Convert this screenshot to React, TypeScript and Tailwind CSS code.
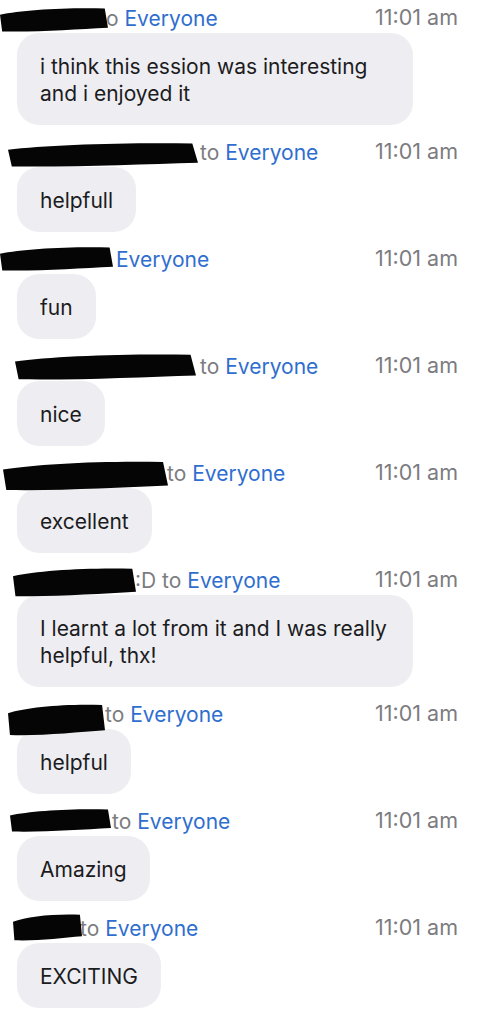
import React from "react";

type Msg = {
  sx: number;
  sw: number;
  st: number;
  sh: number;
  start: number;
  prefix: string;
  lines: string;
};

const msgs: Msg[] = [
  { sx: 0, sw: 108, st: 4, sh: 26, start: 106, prefix: "o ", lines: "i think this ession was interesting and i enjoyed it" },
  { sx: 8, sw: 190, st: 5, sh: 26, start: 200, prefix: "to ", lines: "helpfull" },
  { sx: 0, sw: 113, st: 2, sh: 26, start: 116, prefix: "", lines: "fun" },
  { sx: 15, sw: 181, st: 2, sh: 28, start: 200, prefix: "to ", lines: "nice" },
  { sx: 3, sw: 165, st: 2, sh: 32, start: 167, prefix: "to ", lines: "excellent" },
  { sx: 13, sw: 123, st: 2, sh: 31, start: 135, prefix: ":D to ", lines: "I learnt a lot from it and I was really helpful, thx!" },
  { sx: 8, sw: 97, st: 4, sh: 34, start: 105, prefix: "to ", lines: "helpful" },
  { sx: 10, sw: 101, st: 2, sh: 25, start: 112, prefix: "to ", lines: "Amazing" },
  { sx: 13, sw: 69, st: 0, sh: 29, start: 80, prefix: "to ", lines: "EXCITING" },
];

function Scribble({ w, h }: { w: number; h: number }) {
  const d = `M0,${h * 0.3} C${w * 0.2},${h * 0.12} ${w * 0.6},${h * 0.02} ${w * 0.97},${h * 0.06} L${w},${h * 0.8} C${w * 0.7},${h * 0.86} ${w * 0.35},${h * 0.97} ${w * 0.02},${h * 0.94} Z`;
  return (
    <svg width={w} height={h} viewBox={`0 0 ${w} ${h}`} className="block" style={{ filter: "blur(0.6px)" }}>
      <path d={d} fill="#050505" />
    </svg>
  );
}

export default function App() {
  return (
    <div
      className="w-[479px] min-h-[1024px] bg-white pt-[3px]"
      style={{ fontFamily: "Inter, 'Liberation Sans', sans-serif" }}
    >
      {msgs.map((m, i) => (
        <div key={i} className="mb-[12px]">
          <div className="relative flex h-[30px] items-center pr-[21px]">
            <div className="absolute" style={{ left: m.sx, top: m.st }}>
              <Scribble w={m.sw} h={m.sh} />
            </div>
            <div className="flex-1 text-[21px] leading-none whitespace-pre" style={{ paddingLeft: m.start }}>
              <span className="text-[#7c7c80]">{m.prefix}</span>
              <span className="text-[#2f6ecf]">Everyone</span>
            </div>
            <div className="text-[21.5px] leading-none text-[#7c7c80]">11:01 am</div>
          </div>
          <div className="pl-[17px]">
            <div className="inline-block max-w-[396px] rounded-[22px] bg-[#eeeef2] pl-[23px] pr-[23px] pt-[20px] pb-[18px] text-[21px] leading-[27px] text-[#1c1c1e]">
              {m.lines}
            </div>
          </div>
        </div>
      ))}
    </div>
  );
}
